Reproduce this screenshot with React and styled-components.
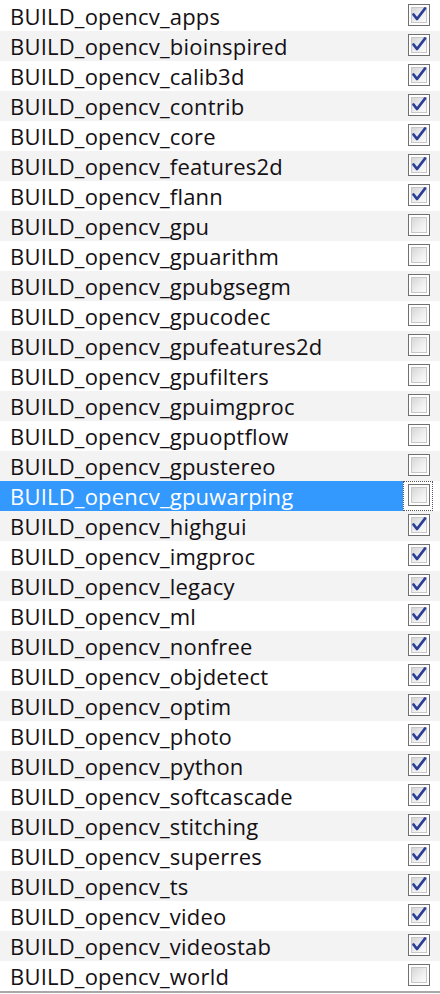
import React from "react";
import styled, { createGlobalStyle } from "styled-components";

const Global = createGlobalStyle`
  html, body { margin: 0; padding: 0; background: #ffffff; }
  body { width: 440px; height: 994px; overflow: hidden; }
`;

const items = [
  ["BUILD_opencv_apps", true],
  ["BUILD_opencv_bioinspired", true],
  ["BUILD_opencv_calib3d", true],
  ["BUILD_opencv_contrib", true],
  ["BUILD_opencv_core", true],
  ["BUILD_opencv_features2d", true],
  ["BUILD_opencv_flann", true],
  ["BUILD_opencv_gpu", false],
  ["BUILD_opencv_gpuarithm", false],
  ["BUILD_opencv_gpubgsegm", false],
  ["BUILD_opencv_gpucodec", false],
  ["BUILD_opencv_gpufeatures2d", false],
  ["BUILD_opencv_gpufilters", false],
  ["BUILD_opencv_gpuimgproc", false],
  ["BUILD_opencv_gpuoptflow", false],
  ["BUILD_opencv_gpustereo", false],
  ["BUILD_opencv_gpuwarping", false],
  ["BUILD_opencv_highgui", true],
  ["BUILD_opencv_imgproc", true],
  ["BUILD_opencv_legacy", true],
  ["BUILD_opencv_ml", true],
  ["BUILD_opencv_nonfree", true],
  ["BUILD_opencv_objdetect", true],
  ["BUILD_opencv_optim", true],
  ["BUILD_opencv_photo", true],
  ["BUILD_opencv_python", true],
  ["BUILD_opencv_softcascade", true],
  ["BUILD_opencv_stitching", true],
  ["BUILD_opencv_superres", true],
  ["BUILD_opencv_ts", true],
  ["BUILD_opencv_video", true],
  ["BUILD_opencv_videostab", true],
  ["BUILD_opencv_world", false],
];

const SELECTED = 16;

const List = styled.div`
  display: flex;
  flex-direction: column;
  padding-top: 1px;
  border-bottom: 2px solid #a8a8a8;
  width: 440px;
`;

const Row = styled.div`
  display: grid;
  grid-template-columns: 403px 30px 1fr;
  height: 30px;
  background: ${(p) => (p.$alt ? "#f3f3f3" : "#ffffff")};
`;

const Name = styled.div`
  display: flex;
  align-items: center;
  padding-left: 10px;
  padding-bottom: 1px;
  font-family: "Open Sans", "Noto Sans", sans-serif;
  font-size: 22px;
  letter-spacing: 0.2px;
  color: ${(p) => (p.$selected ? "#ffffff" : "#141014")};
  background: ${(p) => (p.$selected ? "#3399ff" : "transparent")};
  white-space: nowrap;
  overflow: hidden;
`;

const Cell = styled.div`
  display: flex;
  align-items: center;
  justify-content: center;
  box-sizing: border-box;
  border: 1px dotted ${(p) => (p.$focus ? "#555" : "transparent")};
`;

const Box = styled.div`
  width: 22px;
  height: 22px;
  box-sizing: border-box;
  border: 1px solid #707070;
  padding: 2px;
  background: #ffffff;
  margin-left: 2px;
  margin-top: -2px;
  display: flex;
`;

const Inner = styled.div`
  flex: 1;
  position: relative;
  border: 1px solid #c8c8c8;
  background: linear-gradient(135deg, #d6d6d6 0%, #f0f0f0 60%, #fbfbfb 100%);
`;

const Check = styled.svg`
  position: absolute;
  left: -2px;
  top: -3px;
  width: 18px;
  height: 18px;
`;

function CheckBox({ checked }) {
  return (
    <Box>
      <Inner>
        {checked && (
          <Check viewBox="0 0 18 18">
            <path
              d="M3.5 9.5 L7 14 L15 3.5"
              fill="none"
              stroke="#2b3e96"
              strokeWidth="2.8"
              strokeLinecap="round"
              strokeLinejoin="round"
            />
          </Check>
        )}
      </Inner>
    </Box>
  );
}

export default function App() {
  return (
    <>
      <Global />
      <List>
        {items.map(([name, checked], i) => (
          <Row key={name} $alt={i % 2 === 1}>
            <Name $selected={i === SELECTED}>{name}</Name>
            <Cell $focus={i === SELECTED}>
              <CheckBox checked={checked} />
            </Cell>
            <div />
          </Row>
        ))}
      </List>
    </>
  );
}
